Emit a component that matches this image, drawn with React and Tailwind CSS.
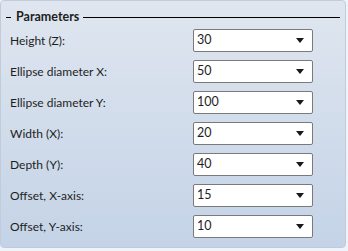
import React from "react";

const rows = [
  ["Height (Z):", "30"],
  ["Ellipse diameter X:", "50"],
  ["Ellipse diameter Y:", "100"],
  ["Width (X):", "20"],
  ["Depth (Y):", "40"],
  ["Offset, X-axis:", "15"],
  ["Offset, Y-axis:", "10"],
];

export default function App() {
  return (
    <div className="w-[348px] h-[251px] bg-[#f0f3f7]" style={{ fontFamily: 'Lato, "Open Sans", sans-serif' }}>
      <div className="w-[346px] h-[248px] rounded-[4px] border border-[#c0ccdb] bg-gradient-to-b from-[#dfe6ef] to-[#c4d3e7] text-[12px] text-[#1e1e1e]">
        <div className="flex items-center h-[14px] mt-[9px] pl-[5px] pr-[5px]">
          <span className="w-[5px] h-px bg-black mr-[4px]" />
          <span className="font-bold text-[12.5px] leading-none pl-px">Parameters</span>
          <span className="flex-1 h-px bg-black ml-[4px]" />
        </div>
        <div className="flex flex-col gap-[8px] mt-[5px]">
          {rows.map(([label, value]) => (
            <div key={label} className="flex items-center h-[23px]">
              <span className="pl-[9px] w-[192px] pt-px">{label}</span>
              <div className="w-[120px] h-[23px] bg-white border border-[#7a7a7a] rounded-[2px] flex items-center pl-[3px] pr-[8px]">
                <span className="flex-1 text-[12.5px]">{value}</span>
                <svg width="8" height="5" viewBox="0 0 8 5"><path d="M0 0 H8 L4 5 Z" fill="#1a1a1a" /></svg>
              </div>
            </div>
          ))}
        </div>
      </div>
    </div>
  );
}
